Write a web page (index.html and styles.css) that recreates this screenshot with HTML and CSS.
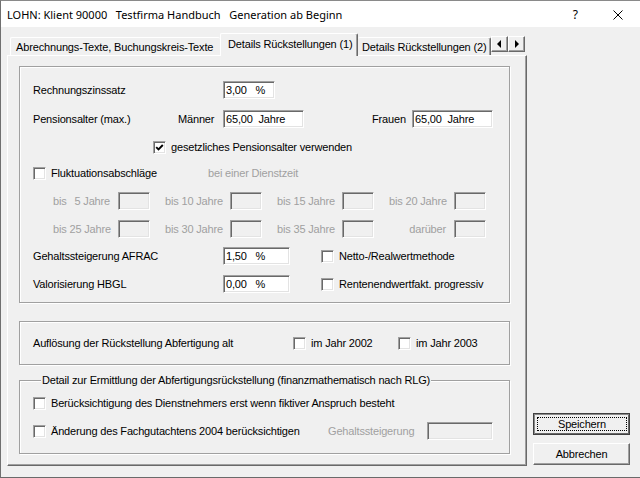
FILE: index.html
```html
<!DOCTYPE html>
<html>
<head>
<meta charset="utf-8">
<link rel="stylesheet" href="styles.css">
</head>
<body>
<div class="window">
  <div class="titlebar">
    <span class="title">LOHN: Klient 90000   Testfirma Handbuch   Generation ab Beginn</span>
    <span class="help">?</span>
    <svg class="close" viewBox="0 0 10 10" width="10" height="10"><path d="M0.5 0.5 L9.5 9.5 M9.5 0.5 L0.5 9.5" stroke="#000" stroke-width="1" fill="none"/></svg>
  </div>
  <div class="client">
    <div class="tabarea">
      <div class="tabstrip">
        <div class="tab tab-first">Abrechnungs-Texte, Buchungskreis-Texte</div>
        <div class="tab tab-active">Details Rückstellungen (1)</div>
        <div class="tab tab-third">Details Rückstellungen (2)</div>
        <div class="scroller">
          <div class="arrow"><svg viewBox="0 0 15 14" width="15" height="14"><polygon points="5,7 9,3 9,11" fill="#000"/></svg></div>
          <div class="arrow"><svg viewBox="0 0 15 14" width="15" height="14"><polygon points="10,7 6,3 6,11" fill="#000"/></svg></div>
        </div>
      </div>
      <div class="panel">
        <div class="group g1">
          <div class="row">
            <span class="lbl-main">Rechnungszinssatz</span>
            <div class="field f-rate">3,00&nbsp;&nbsp;&nbsp;%</div>
          </div>
          <div class="row mt11">
            <span class="lbl-pension">Pensionsalter (max.)</span>
            <span class="lbl-sex">Männer</span>
            <div class="field f-age">65,00&nbsp;&nbsp;Jahre</div>
            <span class="lbl-sex lbl-frauen">Frauen</span>
            <div class="field f-age">65,00&nbsp;&nbsp;Jahre</div>
          </div>
          <div class="row mt10">
            <span class="check checked indent-legal"><svg viewBox="0 0 9 9" width="9" height="9"><path d="M1.2 4.2 L3.5 6.5 L7.8 2" stroke="#000" stroke-width="1.9" fill="none"/></svg></span>
            <span class="cb-label">gesetzliches Pensionsalter verwenden</span>
          </div>
          <div class="row mt8">
            <span class="check"></span>
            <span class="cb-label lbl-fluct">Fluktuationsabschläge</span>
            <span class="disabled">bei einer Dienstzeit</span>
          </div>
          <div class="fluct mt10">
            <div class="cell"><span class="fl-lbl split disabled"><span>bis</span><span>5 Jahre</span></span><div class="field dis f-fl"></div></div>
            <div class="cell"><span class="fl-lbl disabled">bis 10 Jahre</span><div class="field dis f-fl"></div></div>
            <div class="cell"><span class="fl-lbl disabled">bis 15 Jahre</span><div class="field dis f-fl"></div></div>
            <div class="cell"><span class="fl-lbl disabled">bis 20 Jahre</span><div class="field dis f-fl"></div></div>
            <div class="cell"><span class="fl-lbl disabled">bis 25 Jahre</span><div class="field dis f-fl"></div></div>
            <div class="cell"><span class="fl-lbl disabled">bis 30 Jahre</span><div class="field dis f-fl"></div></div>
            <div class="cell"><span class="fl-lbl disabled">bis 35 Jahre</span><div class="field dis f-fl"></div></div>
            <div class="cell"><span class="fl-lbl right disabled">darüber</span><div class="field dis f-fl"></div></div>
          </div>
          <div class="row mt9">
            <span class="lbl-main">Gehaltssteigerung AFRAC</span>
            <div class="field f-pct">1,50&nbsp;&nbsp;&nbsp;%</div>
            <span class="check side-check"></span>
            <span class="cb-label">Netto-/Realwertmethode</span>
          </div>
          <div class="row mt10">
            <span class="lbl-main">Valorisierung HBGL</span>
            <div class="field f-pct">0,00&nbsp;&nbsp;&nbsp;%</div>
            <span class="check side-check"></span>
            <span class="cb-label">Rentenendwertfakt. progressiv</span>
          </div>
        </div>

        <div class="group g2">
          <div class="row">
            <span class="lbl-aufl">Auflösung der Rückstellung Abfertigung alt</span>
            <span class="yr-item"><span class="check"></span><span class="cb-label">im Jahr 2002</span></span>
            <span class="yr-item"><span class="check"></span><span class="cb-label">im Jahr 2003</span></span>
          </div>
        </div>

        <div class="group g3">
          <div class="caption">Detail zur Ermittlung der Abfertigungsrückstellung (finanzmathematisch nach RLG)</div>
          <div class="row mt7">
            <span class="check"></span>
            <span class="cb-label">Berücksichtigung des Dienstnehmers erst wenn fiktiver Anspruch besteht</span>
          </div>
          <div class="row mt10">
            <span class="check"></span>
            <span class="cb-label lbl-fach">Änderung des Fachgutachtens 2004 berücksichtigen</span>
            <span class="disabled lbl-gs">Gehaltssteigerung</span>
            <div class="field dis f-gs"></div>
          </div>
        </div>
      </div>
    </div>
    <div class="buttons">
      <div class="btn btn-default"><span class="focus">Speichern</span></div>
      <div class="btn">Abbrechen</div>
    </div>
  </div>
</div>
</body>
</html>
```

FILE: styles.css
```css
* { box-sizing: border-box; }
html, body { margin: 0; padding: 0; }
body {
  width: 640px;
  height: 478px;
  overflow: hidden;
  background: #f0f0f0;
  font-family: "Liberation Sans", Arial, sans-serif;
  font-size: 11px;
  letter-spacing: -0.17px;
  color: #000;
}
.window {
  width: 640px;
  height: 478px;
  border-left: 1px solid #707070;
  border-top: 1px solid #8a8a8a;
  border-bottom: 1px solid #6a6a6a;
  display: flex;
  flex-direction: column;
}
.titlebar {
  height: 26px;
  flex: none;
  background: #fff;
  display: flex;
  align-items: center;
  padding-left: 6px;
  font-family: "Noto Sans", "Open Sans", sans-serif;
  font-size: 11px;
  letter-spacing: 0;
}
.title { white-space: pre; flex: 1; }
.help { margin-right: 35px; font-size: 12px; }
.close { display: block; margin-right: 17px; margin-top: 2px; }

.client { flex: 1; display: flex; }
.tabarea { margin-left: 6px; width: 520px; display: flex; flex-direction: column; }
.tabstrip { height: 28px; flex: none; display: flex; align-items: flex-end; }
.tab {
  height: 18px;
  display: flex;
  align-items: center;
  white-space: nowrap;
  overflow: hidden;
  border-top: 1px solid #fff;
  border-left: 1px solid #fff;
  border-right: 1px solid #696969;
  border-radius: 2px 2px 0 0;
  box-shadow: inset -1px 0 #a0a0a0;
  letter-spacing: -0.15px;
}
.tab-first { margin-left: 3px; width: 210px; padding-left: 5px; border-right: none; box-shadow: none; }
.tab-active {
  position: relative;
  z-index: 1;
  width: 138px;
  height: 23px;
  margin-bottom: -1px;
  padding-left: 7px;
  padding-bottom: 2px;
  background: #f0f0f0;
}
.tab-third { width: 133px; padding-left: 4px; border-left: none; }
.scroller { align-self: flex-start; margin-top: 9px; display: flex; }
.arrow {
  width: 17px;
  height: 16px;
  border: 1px solid;
  border-color: #fff #696969 #696969 #fff;
  box-shadow: inset -1px -1px #a0a0a0;
  background: #f0f0f0;
}
.arrow svg { display: block; }

.panel {
  width: 520px;
  height: 411px;
  border: 1px solid;
  border-color: #fff #696969 #696969 #fff;
  box-shadow: inset -1px -1px #a0a0a0;
  padding: 10px 0 0 11px;
  display: flex;
  flex-direction: column;
}
.group {
  width: 491px;
  border: 1px solid #a0a0a0;
  box-shadow: inset 1px 1px #fff, 1px 1px #fff;
  padding-left: 13px;
  flex: none;
}
.g1 { height: 237px; padding-top: 14px; }
.g2 { height: 44px; margin-top: 18px; padding-top: 12px; }
.g3 { height: 74px; margin-top: 15px; }

.row { display: flex; align-items: center; height: 18px; white-space: nowrap; }
.mt7 { margin-top: 7px; }
.mt8 { margin-top: 8px; }
.mt9 { margin-top: 9px; }
.mt10 { margin-top: 10px; }
.mt11 { margin-top: 11px; }

.lbl-main { width: 190px; }
.lbl-pension { width: 145px; }
.lbl-sex { width: 45px; }
.lbl-frauen { margin-left: 68px; width: 40px; }
.disabled { color: #a0a0a0; }

.field {
  height: 18px;
  background: #fff;
  border: 1px solid;
  border-color: #a0a0a0 #fff #fff #a0a0a0;
  box-shadow: inset 1px 1px #696969, inset -1px -1px #e3e3e3;
  padding-left: 2px;
  display: flex;
  align-items: center;
  white-space: nowrap;
}
.field.dis { background: #f0f0f0; }
.f-rate { width: 52px; }
.f-age { width: 81px; }
.f-pct { width: 67px; }
.f-fl { width: 32px; }
.f-gs { width: 66px; }

.check {
  width: 13px;
  height: 13px;
  flex: none;
  background: #fff;
  border: 1px solid;
  border-color: #a0a0a0 #fff #fff #a0a0a0;
  box-shadow: inset 1px 1px #696969, inset -1px -1px #e3e3e3;
  display: flex;
  align-items: center;
  justify-content: center;
}
.check svg { display: block; }
.cb-label { margin-left: 5px; }
.indent-legal { margin-left: 120px; }
.lbl-fluct { width: 157px; }
.side-check { margin-left: 31px; }

.fluct {
  display: grid;
  grid-template-columns: repeat(4, 97px);
  grid-auto-rows: 18px;
  column-gap: 15px;
  row-gap: 10px;
  padding-left: 20px;
}
.cell { display: flex; align-items: center; }
.fl-lbl { width: 57px; margin-right: 8px; white-space: nowrap; }
.fl-lbl.split { display: flex; justify-content: space-between; }
.fl-lbl.right { text-align: right; }

.lbl-aufl { width: 260px; }
.yr-item { width: 105px; display: flex; align-items: center; }

.caption {
  display: block;
  width: max-content;
  height: 14px;
  margin: -8px 0 0 8px;
  padding: 0 1px;
  line-height: 14px;
  background: #f0f0f0;
  white-space: nowrap;
}
.lbl-fach { width: 277px; }
.lbl-gs { width: 99px; }

.buttons {
  margin-left: 6px;
  width: 97px;
  display: flex;
  flex-direction: column;
  justify-content: flex-end;
  gap: 8px;
  padding-bottom: 12px;
}
.btn {
  height: 22px;
  display: flex;
  align-items: center;
  justify-content: center;
  background: #f0f0f0;
  border: 1px solid;
  border-color: #fff #696969 #696969 #fff;
  box-shadow: inset -1px -1px #a0a0a0;
}
.btn-default {
  border: 1px solid #404040;
  box-shadow: inset 1px 1px #8a8a8a, inset -1px -1px #696969;
}
.focus {
  flex: 1;
  align-self: stretch;
  margin: 3px 2px 3px 3px;
  border: 1px dotted #000;
  display: flex;
  align-items: center;
  justify-content: center;
}
```
